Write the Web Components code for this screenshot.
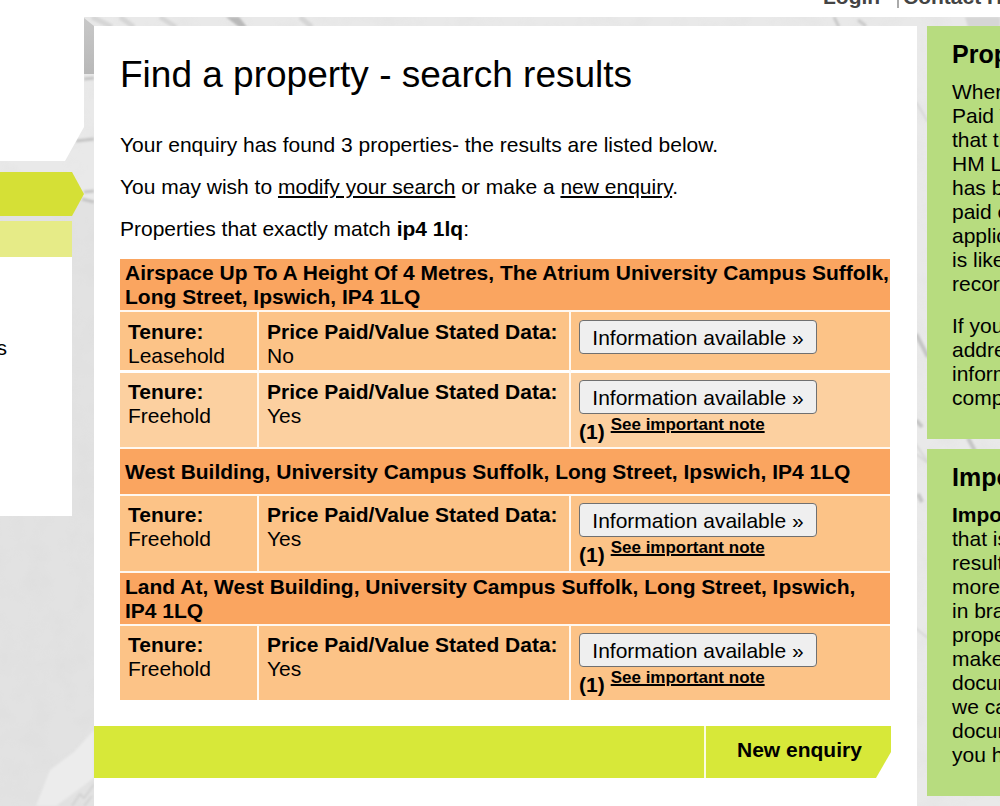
<!DOCTYPE html>
<html lang="en">
<head>
<meta charset="utf-8">
<title>Find a property - search results</title>
<style>
  html, body { margin: 0; min-height: 100%; }
  body { font: 21px/24px "Liberation Sans", Arial, sans-serif; color: #000; background: #e8e8e8; overflow-x: hidden; }
</style>
</head>
<body>
<property-page></property-page>
<script>
const define = (name, html) => {
  const t = document.createElement('template');
  t.innerHTML = html;
  customElements.define(name, class extends HTMLElement {
    constructor() {
      super();
      this.attachShadow({ mode: 'open' }).append(t.content.cloneNode(true));
    }
  });
};

define('stone-backdrop', `
<style>
  :host { display: block; position: absolute; inset: 0; z-index: -1; overflow: hidden; background: #e9e9e9; }
  svg { display: block; width: 100%; height: 100%; }
</style>
<svg aria-hidden="true">
  <defs>
    <filter id="soft" x="-20%" y="-20%" width="140%" height="140%"><feGaussianBlur stdDeviation="1.2"/></filter>
    <filter id="grain"><feTurbulence type="fractalNoise" baseFrequency="0.04" numOctaves="3" seed="4"/><feColorMatrix values="0 0 0 0 .5  0 0 0 0 .5  0 0 0 0 .5  .5 0 0 0 -.2"/></filter>
    <linearGradient id="edge" x1="0" y1="0" x2="0" y2="1"><stop offset="0" stop-color="#c8c8c8"/><stop offset="1" stop-color="#b8b8b8"/></linearGradient>
  </defs>
  <rect y="200" width="94" height="606" fill="#e2e2e2"/>
  <rect width="100%" height="100%" filter="url(#grain)" opacity=".3"/>
  <path d="M84 18l10 8v48H84z" fill="url(#edge)"/>
  <g filter="url(#soft)" fill="none">
    <path d="M84 79l10-1M76 141l18-2M84 192l10-1M82 199l12 3" stroke="#c4c4c4" stroke-width="3"/>
    <path d="M92 17l20 10M120 17l14 10M160 17l16 10M300 17l12 10" stroke="#d6d6d6" stroke-width="5"/>
    <path d="M226 17l13 10h8l-8-10z" fill="#b9b9b9"/>
    <path d="M834 17l5 10M858 20l8 6" stroke="#c9c9c9" stroke-width="3"/>
    <path d="M965 17h35v10h-32z" fill="#d6d6d6"/>
    <path d="M916 102l12 20M914 442l14 20M916 454l12 9M914 627l14 11" stroke="#d6d6d6" stroke-width="2"/>
    <path d="M916 334l12 23M916 420l6 7M918 494l4 8M968 438l7 13" stroke="#c4c4c4" stroke-width="4"/>
    <path d="M50 770l24-18 20-22v48L56 806H36z" fill="#ececec"/>
    <path d="M72 806l8-12 4 4 6-8 4-6M84 806l8-10" stroke="#d2d2d2" stroke-width="2"/>
  </g>
</svg>`);

define('top-bar', `
<style>
  :host { display: flex; align-items: flex-end; justify-content: flex-end; height: 17px; overflow: hidden; background: #fff; font-weight: bold; }
  nav { display: flex; align-items: flex-end; flex: 0 0 177px; min-width: 0; width: 177px; padding-bottom: 9px; white-space: nowrap; }
  a { color: #444; text-decoration: none; line-height: 22px; }
  a:first-child { flex: 0 0 74px; }
  a:last-child { border-left: 2px solid #aaa; padding-left: 4px; }
</style>
<nav aria-label="Account"><a href="#login">Login</a><a href="#contact">Contact HMLR</a></nav>`);

define('side-nav', `
<style>
  :host { display: block; }
  .logo { height: 144px; background: #fff; clip-path: polygon(0 0, 100% 0, 100% 110px, 65px 100%, 0 100%); }
  .current { height: 44px; margin-top: 11px; background: #d5e036; clip-path: polygon(0 0, 72px 0, 100% 50%, 72px 100%, 0 100%); }
  .sub { height: 36px; margin: 5px 12px 0 0; background: #e6eb87; }
  nav { height: 180px; padding-top: 79px; margin-right: 12px; background: #fff; }
  a { display: flex; justify-content: flex-end; width: 7px; color: #000; text-decoration: none; }
</style>
<div class="logo"></div>
<div class="current"></div>
<div class="sub"></div>
<nav aria-label="Services"><a href="#services">s</a></nav>`);

define('info-panel', `
<style>
  :host { display: block; padding: 15px 0 29px 25px; background: #b7dc7f; overflow: hidden; white-space: nowrap; }
  h2 { margin: 0 0 13px; font-size: 25px; line-height: 26px; }
  ::slotted(p) { margin: 0 0 18px !important; }
  ::slotted(p:last-child) { margin: 0 !important; }
</style>
<h2><slot name="title"></slot></h2>
<slot></slot>`);

define('info-button', `
<style>
  :host { display: block; }
  button { display: block; width: 238px; height: 34px; padding: 2px 0 0; font: inherit; line-height: 30px; color: #000; background: #efefef; border: 1px solid #707070; border-radius: 4px; white-space: nowrap; }
  .note { display: flex; align-items: flex-start; gap: 6px; font-weight: bold; }
  .note span { padding-top: 6px; }
  a { color: #000; font-size: 17px; line-height: 22px; text-decoration-thickness: 2px; white-space: nowrap; }
  :host(:not([note])) .note { display: none; }
</style>
<button type="button">Information available »</button>
<div class="note"><span>(1)</span><a href="#note">See important note</a></div>`);

define('results-table', `
<style>
  :host { display: block; }
  table { width: 100%; border-collapse: separate; border-spacing: 0; table-layout: fixed; }
  col.tenure { width: 139px; } col.price { width: 312px; }
  th, td { box-sizing: border-box; padding: 0 8px; text-align: left; border-bottom: 2px solid #fff8f0; }
  th { height: 53px; background: #faa560; white-space: nowrap; padding: 0 0 0 5px; }
  td { height: 76px; padding-top: 7px; vertical-align: top; background: #fcc387; white-space: nowrap; }
  td:not(:last-child) { border-right: 2px solid #fff8f0; }
  .short td { height: 61px; padding-top: 8px; border-bottom: 3px solid #fff; }
  .light td { background: #fcd0a0; }
  .slim th { height: 47px; }
  .tall td { height: 77px; }
  tr:last-child td { border-bottom: 0; height: 74px; }
  b { display: block; }
</style>
<table>
  <colgroup><col class="tenure"><col class="price"><col></colgroup>
  <tbody>
  <tr><th colspan="3" scope="colgroup">Airspace Up To A Height Of 4 Metres, The Atrium University Campus Suffolk,<br>Long Street, Ipswich, IP4 1LQ</th></tr>
  <tr class="short"><td><b>Tenure:</b>Leasehold</td><td><b>Price Paid/Value Stated Data:</b>No</td><td><info-button></info-button></td></tr>
  <tr class="light"><td><b>Tenure:</b>Freehold</td><td><b>Price Paid/Value Stated Data:</b>Yes</td><td><info-button note></info-button></td></tr>
  <tr class="slim"><th colspan="3" scope="colgroup">West Building, University Campus Suffolk, Long Street, Ipswich, IP4 1LQ</th></tr>
  <tr class="tall"><td><b>Tenure:</b>Freehold</td><td><b>Price Paid/Value Stated Data:</b>Yes</td><td><info-button note></info-button></td></tr>
  <tr><th colspan="3" scope="colgroup">Land At, West Building, University Campus Suffolk, Long Street, Ipswich,<br>IP4 1LQ</th></tr>
  <tr><td><b>Tenure:</b>Freehold</td><td><b>Price Paid/Value Stated Data:</b>Yes</td><td><info-button note></info-button></td></tr>
  </tbody>
</table>`);

define('action-bar', `
<style>
  :host { display: flex; justify-content: flex-end; height: 52px; margin-right: 26px; background: #d7e839; clip-path: polygon(0 0, 100% 0, 100% 26px, calc(100% - 15px) 100%, 0 100%); }
  a { box-sizing: border-box; width: 187px; padding: 0 0 4px 31px; line-height: 48px; border-left: 2px solid #fafce0; color: #000; font-weight: bold; text-decoration: none; white-space: nowrap; }
</style>
<a href="#new">New enquiry</a>`);

define('search-results', `
<style>
  :host { display: block; background: #fff; }
  .body { padding: 25px 27px 26px 26px; }
  h1 { margin: 0 0 34px; font-size: 37px; line-height: 48px; font-weight: normal; white-space: nowrap; }
  p { margin: 0 0 18px; white-space: nowrap; }
  a { color: #000; }
</style>
<div class="body">
  <h1>Find a property - search results</h1>
  <p>Your enquiry has found 3 properties- the results are listed below.</p>
  <p>You may wish to <a href="#modify">modify your search</a> or make a <a href="#new">new enquiry</a>.</p>
  <p>Properties that exactly match <b>ip4 1lq</b>:</p>
  <results-table></results-table>
</div>
<action-bar></action-bar>`);

define('property-page', `
<style>
  :host { display: flex; flex-direction: column; position: relative; z-index: 0; min-height: 100vh; overflow: hidden; }
  .cols { display: grid; grid-template-columns: 84px minmax(0, 1fr) 73px; gap: 10px; flex: 1; }
  search-results { margin-top: 9px; }
  aside { display: flex; flex-direction: column; gap: 10px; margin-top: 9px; min-width: 0; }
</style>
<stone-backdrop></stone-backdrop>
<top-bar></top-bar>
<div class="cols">
  <side-nav></side-nav>
  <search-results></search-results>
  <aside>
    <info-panel>
      <span slot="title">Property</span>
      <p>Where<br>Paid Value<br>that the<br>HM Land<br>has been<br>paid or<br>application<br>is likely<br>recorded</p>
      <p>If you<br>address<br>information<br>complete</p>
    </info-panel>
    <info-panel>
      <span slot="title">Important</span>
      <p><b>Important</b><br>that is<br>results<br>more<br>in brackets<br>property<br>make<br>document<br>we can<br>document<br>you have</p>
    </info-panel>
  </aside>
</div>`);
</script>
</body>
</html>
